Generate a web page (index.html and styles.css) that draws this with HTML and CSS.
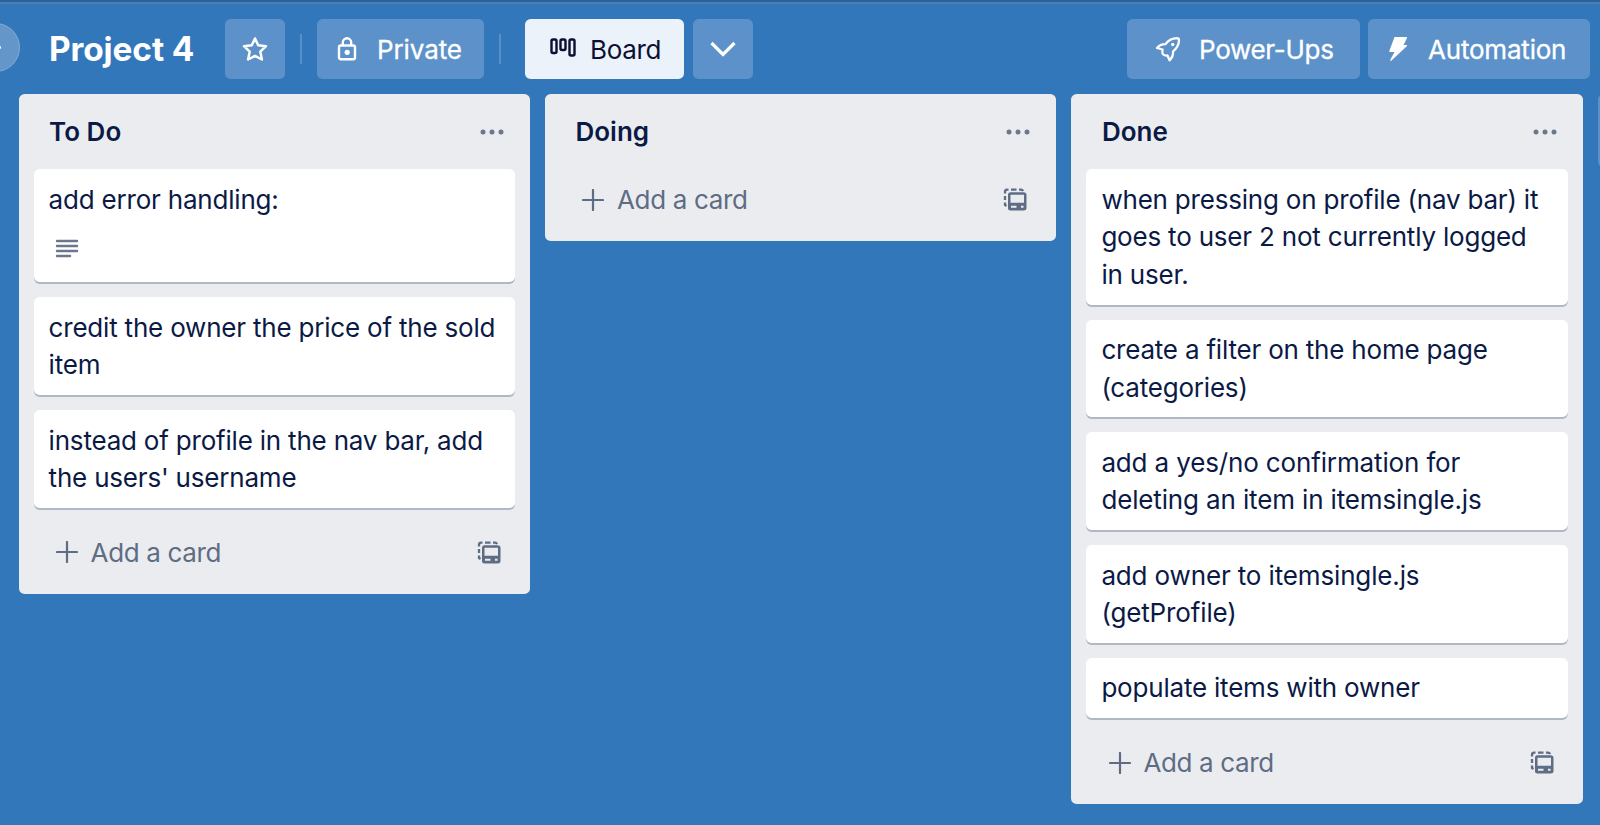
FILE: index.html
```html
<!DOCTYPE html>
<html lang="en">
<head>
<meta charset="utf-8">
<title>Project 4</title>
<link rel="stylesheet" href="styles.css">
</head>
<body>
<svg class="defs" aria-hidden="true">
  <symbol id="dots" viewBox="0 0 24 8"><circle cx="3" cy="4" r="2.5"/><circle cx="12" cy="4" r="2.5"/><circle cx="21" cy="4" r="2.5"/></symbol>
  <symbol id="plus" viewBox="0 0 22 22"><path d="M11 1v20M1 11h20" fill="none" stroke="currentColor" stroke-width="2.200" stroke-linecap="round"/></symbol>
  <symbol id="template" viewBox="0 0 24 23"><path d="M2 5.500V3.800Q2 1.600 4.200 1.600H5.500M8 1.600h5.500M16 1.600h2q1.500 0 2 1.500M2 8v4M2 14.500v2.500l1.500 1" fill="none" stroke="currentColor" stroke-width="2.300"/><path fill-rule="evenodd" d="M7.500 4.300H20.500Q23.500 4.300 23.500 7V20Q23.500 22.500 20.500 22.500H7.500Q5 22.500 5 20V7Q5 4.300 7.500 4.300ZM7.500 6.800V14.800H21V6.800ZM8 17.700V19.700H13.500V17.700ZM18 17.700V19.700H20.500V17.700Z"/></symbol>
</svg>
<div class="app">
  <div class="topbar"></div>
  <header class="header">
    <div class="back"><span class="back-mark"></span></div>
    <h1 class="title">Project 4</h1>
    <button class="btn star"><svg width="28" height="28" viewBox="0 0 28 28"><path d="M14 3.500 17.200 10.200 25 11.200 19.300 16.600 20.900 24.500 14 20.900 7.100 24.500 8.700 16.600 3 11.200 10.800 10.200Z" fill="none" stroke="currentColor" stroke-width="2.500" stroke-linejoin="round"/></svg></button>
    <span class="sep"></span>
    <button class="btn private"><svg width="20" height="24" viewBox="0 0 20 24"><rect x="2" y="8.500" width="16" height="13.700" rx="1.800" fill="none" stroke="currentColor" stroke-width="2.400"/><path d="M5.800 8V5.500a4.200 4.200 0 0 1 8.400 0V8" fill="none" stroke="currentColor" stroke-width="2.400"/><circle cx="10.200" cy="15.300" r="2.600" fill="currentColor"/></svg><span>Private</span></button>
    <span class="sep"></span>
    <button class="btn board"><svg width="26" height="20" viewBox="0 0 26 20"><g fill="none" stroke="currentColor" stroke-width="2.400"><rect x="1.500" y="1.500" width="5" height="13.500" rx="1.500"/><rect x="10.500" y="1.500" width="5" height="10.500" rx="1.500"/><rect x="19.500" y="1.500" width="5" height="16" rx="1.500"/></g></svg><span>Board</span></button>
    <button class="btn views"><svg width="28" height="18" viewBox="0 0 28 18"><path d="M2.500 3 14 14.500 25.500 3" fill="none" stroke="currentColor" stroke-width="3.200"/></svg></button>
    <button class="btn power"><svg width="26" height="26" viewBox="0 0 26 26"><path d="M2 12Q5 8.200 10.500 8.200 14.500 2.500 22 2.200 24 2.200 24 4.500 23.800 10.500 18 15.500 18.500 20.500 14.500 24.300L12.500 19.500Q9 20 7.800 18 6.800 16.500 7.600 13.500Z" fill="none" stroke="currentColor" stroke-width="2.300" stroke-linejoin="round"/><circle cx="17.700" cy="8.500" r="1.700" fill="currentColor"/></svg><span>Power-Ups</span></button>
    <button class="btn auto"><svg width="20" height="26" viewBox="0 0 20 26"><path d="M6.500 1H18.500Q19.500 1 19 2L15.500 9H18.500Q19.500 9 19 10L3 25Q2 25 2.200 24L6.500 16H2Q1 16 1.300 15Z" fill="currentColor"/></svg><span>Automation</span></button>
  </header>
  <main class="lists">
    <section class="list">
      <div class="list-head"><h2>To Do</h2><svg class="dots"><use href="#dots"/></svg></div>
      <div class="cards">
        <article class="card"><p>add error handling:</p><svg class="desc" viewBox="0 0 22 20"><path d="M1 2h20M1 7h20M1 12h20M1 17h13" stroke="currentColor" stroke-width="2.400" stroke-linecap="round"/></svg></article>
        <article class="card"><p>credit the owner the price of the sold<br>item</p></article>
        <article class="card"><p>instead of profile in the nav bar, add<br>the users' username</p></article>
      </div>
      <div class="add"><svg class="plus"><use href="#plus"/></svg><span>Add a card</span><svg class="template"><use href="#template"/></svg></div>
    </section>
    <section class="list">
      <div class="list-head"><h2>Doing</h2><svg class="dots"><use href="#dots"/></svg></div>
      <div class="add first"><svg class="plus"><use href="#plus"/></svg><span>Add a card</span><svg class="template"><use href="#template"/></svg></div>
    </section>
    <section class="list">
      <div class="list-head"><h2>Done</h2><svg class="dots"><use href="#dots"/></svg></div>
      <div class="cards">
        <article class="card"><p>when pressing on profile (nav bar) it<br>goes to user 2 not currently logged<br>in user.</p></article>
        <article class="card"><p>create a filter on the home page<br>(categories)</p></article>
        <article class="card loose"><p>add a yes/no confirmation for<br>deleting an item in itemsingle.js</p></article>
        <article class="card loose"><p>add owner to itemsingle.js<br>(getProfile)</p></article>
        <article class="card"><p>populate items with owner</p></article>
      </div>
      <div class="add"><svg class="plus"><use href="#plus"/></svg><span>Add a card</span><svg class="template"><use href="#template"/></svg></div>
    </section>
    <div class="add-list"></div>
  </main>
</div>
</body>
</html>
```

FILE: styles.css
```css
* { box-sizing: border-box; }
body { margin: 0; font-family: Inter, "Liberation Sans", sans-serif; font-size: 26px; color: #0b1a45; }
h1, h2, p { margin: 0; }
svg { display: block; flex: none; fill: currentColor; }
.defs { position: absolute; width: 0; height: 0; }
.app { width: 1600px; height: 825px; overflow: hidden; background: #3377bb; }
.topbar { height: 4px; background: #4c7fb0; border-top: 2px solid #2a619a; }
.header { height: 90px; padding: 15px 10px 0 0; display: flex; align-items: flex-start; color: #fff; }
.back { flex: none; display: flex; align-items: center; width: 49px; height: 49px; margin: 4px 0 0 -29.500px; padding-left: 21px; border: 1.5px solid #84abd3; border-radius: 50%; background: #6496ca; }
.back-mark { width: 8px; height: 3px; border-radius: 2px; background: #fff; }
.title { width: 176px; margin-left: 29.500px; font-size: 33.400px; font-weight: 700; line-height: 60px; letter-spacing: -0.1px; white-space: nowrap; }
.btn { flex: none; height: 60px; padding: 0; border: 0; border-radius: 5.6px; display: flex; align-items: center; background: #5c92c9; color: #fff; font: inherit; letter-spacing: -0.1px; -webkit-text-stroke: 0.300px; white-space: nowrap; }
.star { width: 60px; justify-content: center; }
.sep { flex: none; width: 2px; height: 30px; margin: 15px 15px 0; background: #5790c8; }
.private { width: 167px; padding-left: 20px; gap: 20px; }
.board { width: 159px; margin-left: 9px; padding-left: 25px; gap: 14px; background: #ebf2f9; color: #0b1033; letter-spacing: -0.3px; -webkit-text-stroke: 0; }
.board svg { margin-top: -2px; }
.views { width: 60px; margin-left: 9px; justify-content: center; }
.power { width: 233px; margin-left: auto; padding-left: 28px; gap: 18px; letter-spacing: -0.3px; }
.auto { width: 222px; margin-left: 8px; padding-left: 20px; gap: 20px; letter-spacing: -0.2px; }
.lists { display: flex; align-items: flex-start; gap: 15px; padding-left: 18.6px; }
.list { flex: none; width: 511.400px; border-radius: 5.6px; background: #ebecf0; padding-bottom: 8px; }
.list-head { height: 75.300px; padding: 0 26px 0 30.500px; display: flex; align-items: center; justify-content: space-between; }
.list-head h2 { font-size: 26px; font-weight: 600; line-height: 37.600px; }
.dots { width: 24px; height: 8px; color: #6b778c; }
.cards { padding: 0 15px; display: flex; flex-direction: column; gap: 15px; }
.card { padding: 11.300px 15px; border-radius: 5.6px; background: #fff; box-shadow: 0 1.900px 0 #b0b7c5; line-height: 37.600px; letter-spacing: -0.200px; white-space: nowrap; }
.loose { letter-spacing: -0.140px; }
.desc { width: 24px; height: 20px; margin: 20.500px 0 12.500px 6.500px; color: #6b778c; }
.add { height: 77.600px; padding: 11px 29px 0 37.500px; display: flex; align-items: center; color: #5e6c84; letter-spacing: -0.35px; }
.add.first { height: 63.500px; padding-top: 0; padding-bottom: 3px; }
.plus { width: 22px; height: 22px; margin-right: 12.500px; }
.template { width: 24px; height: 23px; margin-left: auto; }
.add-list { flex: none; width: 512px; height: 73px; border-radius: 5.6px; background: #5c92c9; }
```
